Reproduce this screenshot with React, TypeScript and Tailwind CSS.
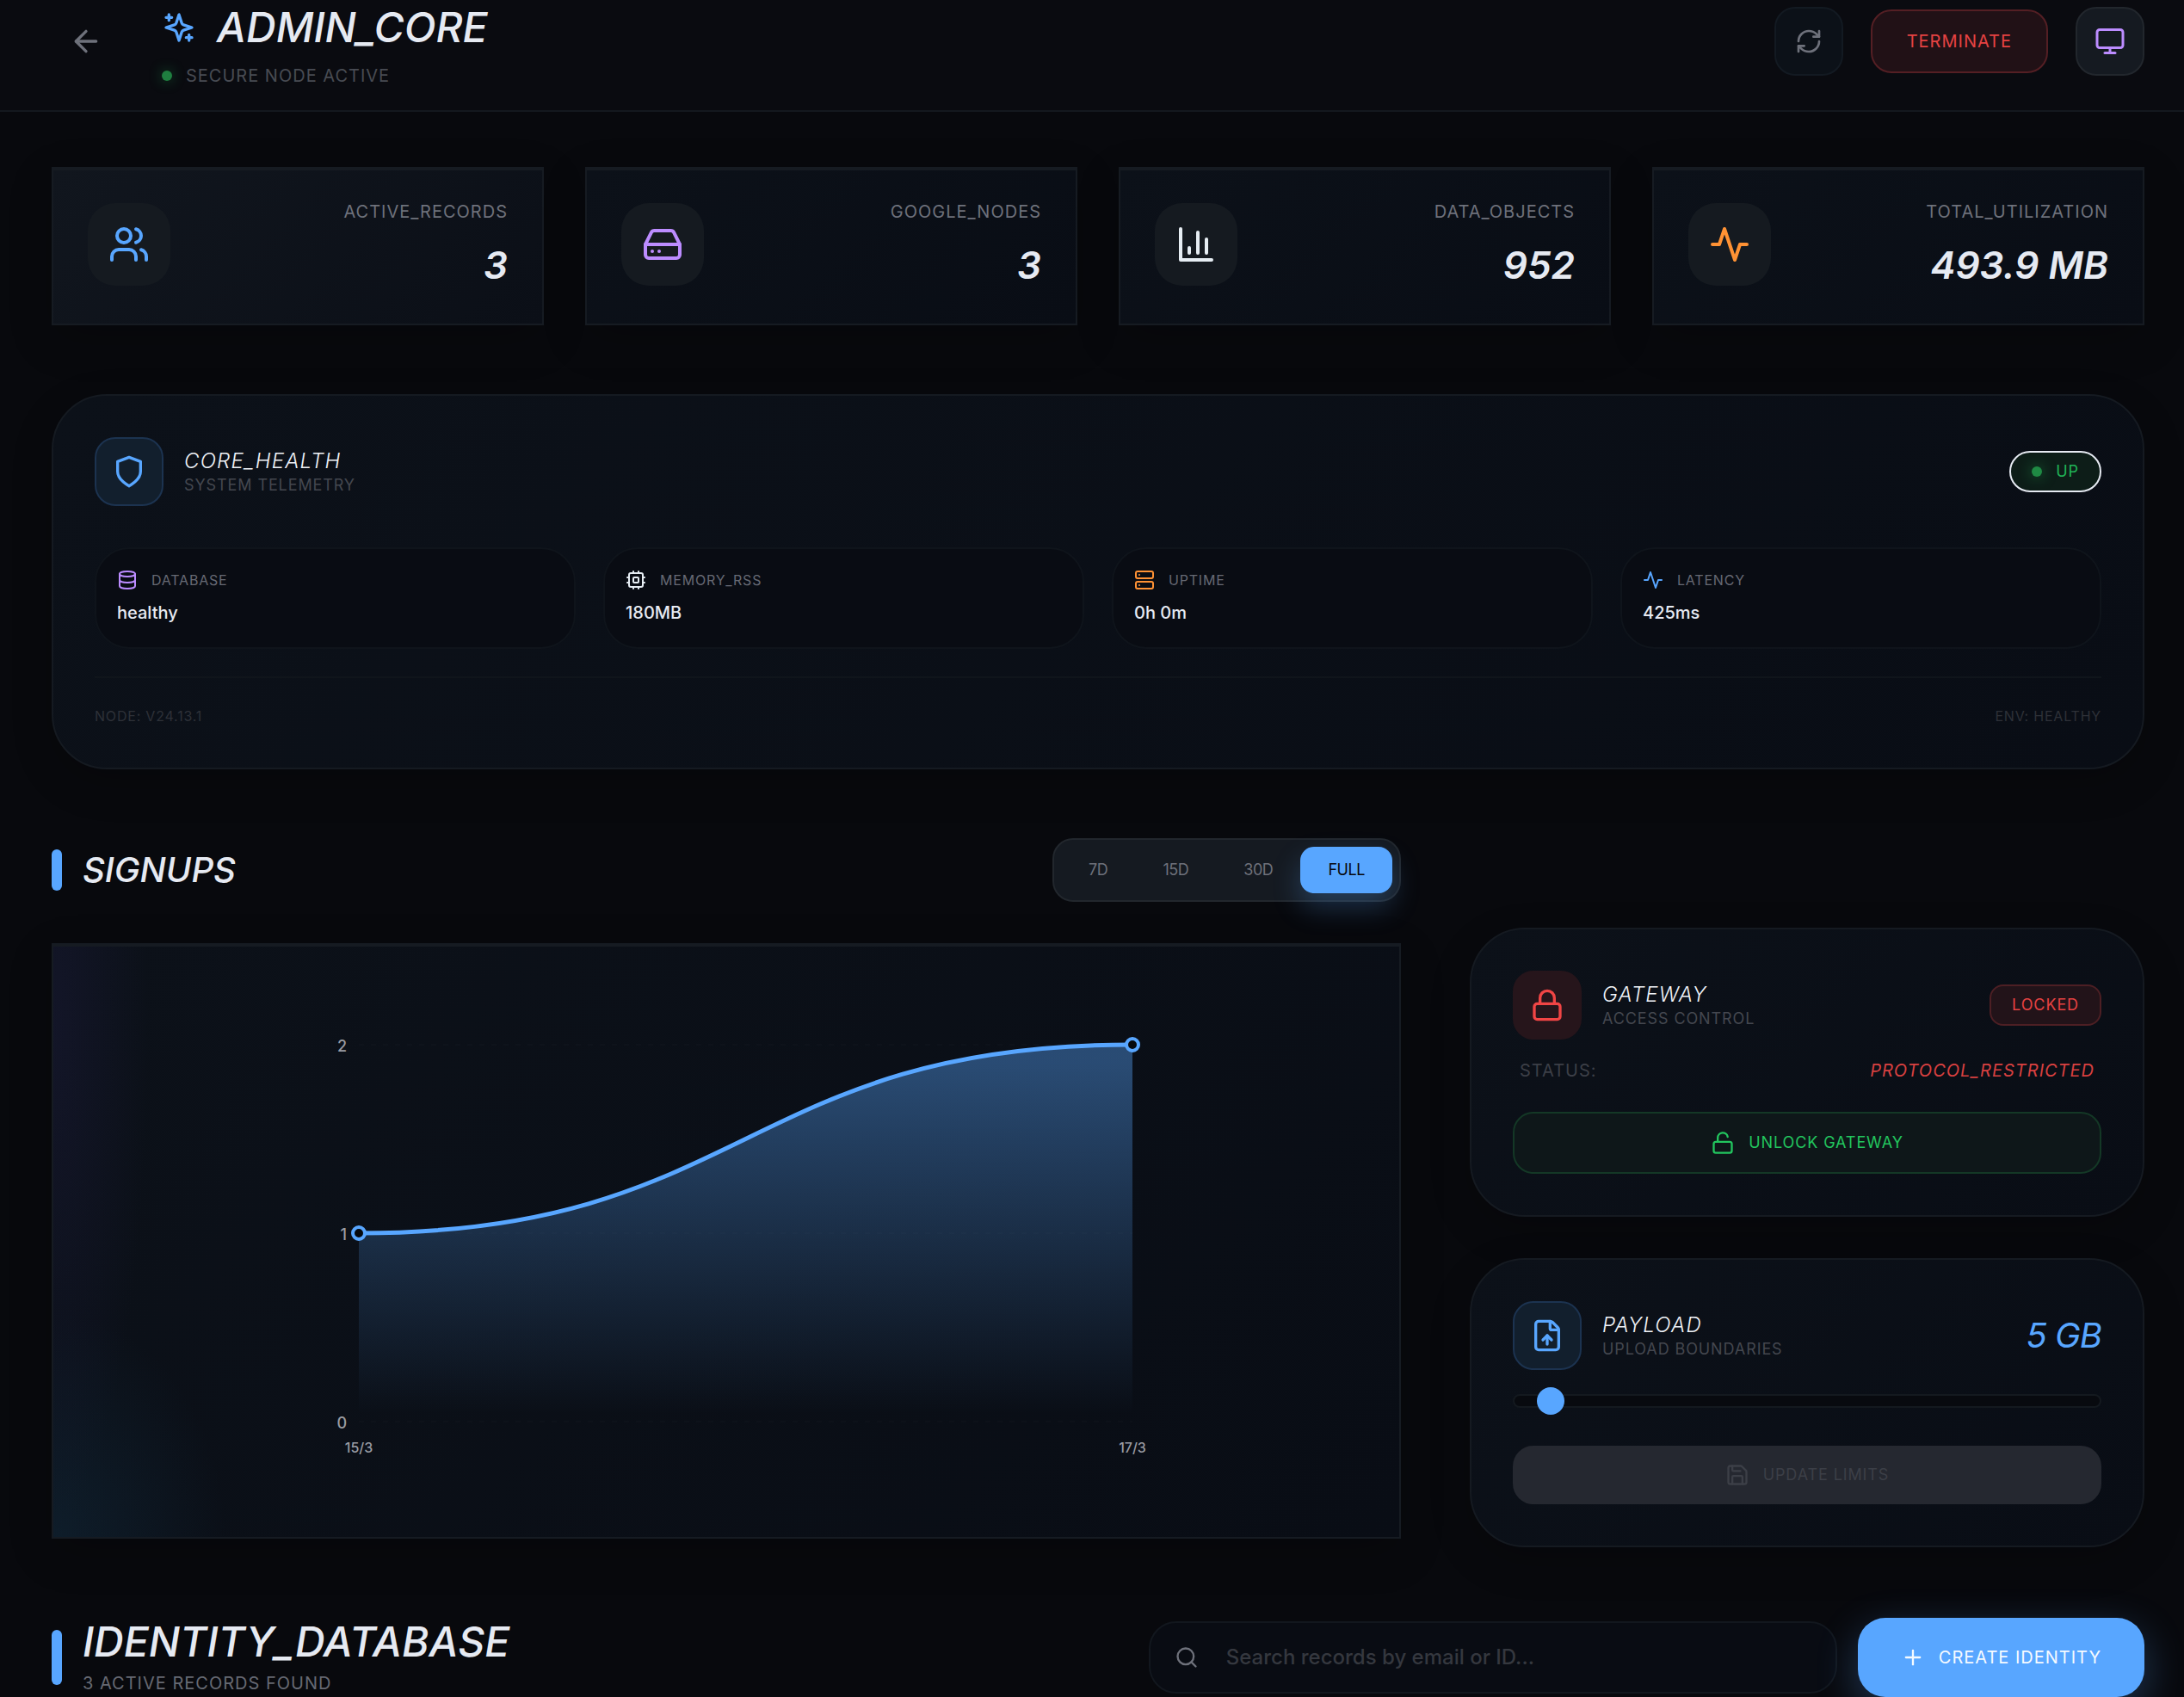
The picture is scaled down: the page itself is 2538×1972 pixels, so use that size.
import type { ReactNode } from "react"
import {
  ArrowLeft,
  Database,
  FileUp,
  HardDrive,
  Lock,
  LockOpen,
  Monitor,
  Plus,
  RefreshCw,
  Save,
  Search,
  Server,
  Users,
} from "lucide-react"

const panel =
  "rounded-[64px] border-2 border-[#151a21] bg-linear-135 from-[#0c1119] to-[#090d15] p-12 shadow-[0_16px_48px_rgba(0,0,0,0.2)]"

function Icon({ className, children }: { className: string; children: ReactNode }) {
  return (
    <svg
      className={className}
      viewBox="0 0 24 24"
      fill="none"
      stroke="currentColor"
      strokeWidth="2"
      strokeLinecap="round"
      strokeLinejoin="round"
      aria-hidden="true"
    >
      {children}
    </svg>
  )
}

function SparklesIcon({ className }: { className: string }) {
  return (
    <Icon className={className}>
      <path d="m12 3-1.912 5.813a2 2 0 0 1-1.275 1.275L3 12l5.813 1.912a2 2 0 0 1 1.275 1.275L12 21l1.912-5.813a2 2 0 0 1 1.275-1.275L21 12l-5.813-1.912a2 2 0 0 1-1.275-1.275L12 3Z" />
      <path d="M5 3v4M19 17v4M3 5h4M17 19h4" />
    </Icon>
  )
}

function BarsIcon({ className }: { className: string }) {
  return (
    <Icon className={className}>
      <path d="M3 3v18h18M18 17V9M13 17V5M8 17v-3" />
    </Icon>
  )
}

function PulseIcon({ className }: { className: string }) {
  return (
    <Icon className={className}>
      <path d="M22 12h-4l-3 9L9 3l-3 9H2" />
    </Icon>
  )
}

function ShieldIcon({ className }: { className: string }) {
  return (
    <Icon className={className}>
      <path d="M12 22s8-4 8-10V5l-8-3-8 3v7c0 6 8 10 8 10" />
    </Icon>
  )
}

function ChipIcon({ className }: { className: string }) {
  return (
    <Icon className={className}>
      <rect x="4" y="4" width="16" height="16" rx="2" />
      <rect x="9" y="9" width="6" height="6" rx="1" />
      <path d="M15 2v2M15 20v2M2 15h2M2 9h2M20 15h2M20 9h2M9 2v2M9 20v2" />
    </Icon>
  )
}

const stats = [
  { label: "ACTIVE_RECORDS", value: "3", icon: <Users className="size-12 text-[#58a6ff]" />, bg: "from-[#11161e] to-[#0b0f17]" },
  { label: "GOOGLE_NODES", value: "3", icon: <HardDrive className="size-12 text-[#bc8cff]" />, bg: "from-[#0c1119] to-[#090d15]" },
  { label: "DATA_OBJECTS", value: "952", icon: <BarsIcon className="size-12 text-[#e6edf3]" />, bg: "from-[#0c1119] to-[#090d15]" },
  { label: "TOTAL_UTILIZATION", value: "493.9 MB", icon: <PulseIcon className="size-12 text-[#ff9234]" />, bg: "from-[#0c1119] to-[#090d15]" },
]

const telemetry = [
  { label: "DATABASE", value: "healthy", icon: <Database className="size-6 text-[#bc8cff]" /> },
  { label: "MEMORY_RSS", value: "180MB", icon: <ChipIcon className="size-6 text-[#e6edf3]" /> },
  { label: "UPTIME", value: "0h 0m", icon: <Server className="size-6 text-[#ff9234]" /> },
  { label: "LATENCY", value: "425ms", icon: <PulseIcon className="size-6 text-[#58a6ff]" /> },
]

const ranges = ["7D", "15D", "30D", "FULL"]

function PanelTitle({ icon, box, title, subtitle }: { icon: ReactNode; box: string; title: string; subtitle: string }) {
  return (
    <div className="flex items-center gap-6">
      <div className={`flex size-20 items-center justify-center rounded-3xl ${box}`}>{icon}</div>
      <div className="pt-1">
        <h3 className="text-2xl leading-7 font-light tracking-wider text-[#f0f3f8] italic">{title}</h3>
        <p className="text-lg leading-7 tracking-wider text-[#44474f]">{subtitle}</p>
      </div>
    </div>
  )
}

function SignupsChart() {
  return (
    <svg className="mx-auto block h-[560px] w-[1000px] max-w-full" viewBox="0 0 1000 560" role="img" aria-label="Signups">
      <defs>
        <linearGradient id="signups" x1="0" y1="0" x2="0" y2="1">
          <stop offset="5%" stopColor="#58a6ff" stopOpacity="0.4" />
          <stop offset="98%" stopColor="#58a6ff" stopOpacity="0" />
        </linearGradient>
      </defs>
      <g stroke="#ffffff" strokeOpacity="0.015" strokeWidth="2" strokeDasharray="6 8">
        <path d="M73 52H972" />
        <path d="M73 271H972" />
        <path d="M73 490H972" />
      </g>
      <path d="M73 271C522.5 271 522.5 52 972 52V490H73Z" fill="url(#signups)" />
      <path d="M73 271C522.5 271 522.5 52 972 52" fill="none" stroke="#58a6ff" strokeWidth="5" />
      <g fill="#07090d" stroke="#58a6ff" strokeWidth="4">
        <circle cx="73" cy="271" r="7" />
        <circle cx="972" cy="52" r="7" />
      </g>
      <g fill="#9a9ca4" fontWeight="500">
        <g fontSize="18" textAnchor="end">
          <text x="59" y="60">2</text>
          <text x="59" y="279">1</text>
          <text x="59" y="498">0</text>
        </g>
        <g fontSize="16" textAnchor="middle">
          <text x="73" y="526">15/3</text>
          <text x="972" y="526">17/3</text>
        </g>
      </g>
    </svg>
  )
}

export default function App() {
  return (
    <div className="h-screen overflow-hidden bg-[#08090d] font-['Inter','Noto_Sans',sans-serif] text-[#e6eaf2]">
      {/* Header */}
      <header className="border-b-2 border-[#14181e] bg-[#0a0b10] pt-2 pr-[46px] pb-6 pl-[60px]">
        <div className="flex items-start justify-between">
          <div className="flex items-start gap-12">
            <button type="button" aria-label="Back" className="flex size-20 items-center justify-center text-[#6e717b]">
              <ArrowLeft className="size-10" />
            </button>
            <div className="flex flex-col gap-4">
              <div className="flex items-center gap-6">
                <SparklesIcon className="size-10 text-[#58a6ff]" />
                <h1 className="text-5xl leading-12 font-medium italic">ADMIN_CORE</h1>
              </div>
              <div className="flex items-center gap-4">
                <span className="size-3 rounded-full bg-[#1f7f40] shadow-[0_0_16px_rgba(34,197,94,0.4)]" />
                <span className="text-xl leading-8 tracking-wider text-[#484b53]">SECURE NODE ACTIVE</span>
              </div>
            </div>
          </div>
          <div className="flex h-20 items-center gap-8">
            <button
              type="button"
              aria-label="Refresh"
              className="flex size-20 items-center justify-center rounded-3xl border-2 border-[#131a22] bg-[#0c1118] text-[#6e717b]"
            >
              <RefreshCw className="size-8" />
            </button>
            <button
              type="button"
              className="h-[74px] rounded-3xl border-2 border-[#541f24] bg-[#211116] px-10 text-xl tracking-wider text-[#e54242]"
            >
              TERMINATE
            </button>
            <button
              type="button"
              aria-label="Display"
              className="flex size-20 items-center justify-center rounded-3xl border-2 border-[#22272d] bg-[#151a21] text-[#bc8cff]"
            >
              <Monitor className="size-9" />
            </button>
          </div>
        </div>
      </header>

      <main className="flex flex-col gap-20 pt-16 pr-[46px] pl-[60px]">
        {/* Stats */}
        <section className="grid grid-cols-4 gap-12">
          {stats.map((stat) => (
            <div
              key={stat.label}
              className={`flex items-start justify-between border-2 border-[#161b22] bg-linear-135 p-10 shadow-[inset_0_2px_0_#161b22,0_16px_48px_rgba(0,0,0,0.2)] ${stat.bg}`}
            >
              <div className="flex size-24 items-center justify-center rounded-[32px] bg-[#151a20]">{stat.icon}</div>
              <div className="flex flex-col gap-6 text-right">
                <p className="text-xl leading-5 tracking-wider text-[#6e717b]">{stat.label}</p>
                <p className="text-[44px] leading-[56px] font-semibold italic">{stat.value}</p>
              </div>
            </div>
          ))}
        </section>

        {/* Core health */}
        <section className={panel}>
          <div className="flex items-center justify-between">
            <PanelTitle
              icon={<ShieldIcon className="size-10 text-[#58a6ff]" />}
              box="border-2 border-[#1c3350] bg-[#121f2d]"
              title="CORE_HEALTH"
              subtitle="SYSTEM TELEMETRY"
            />
            <div className="flex h-12 items-center gap-4 rounded-full border-2 border-[#e6eaf2] bg-[#0d1d18] px-6">
              <span className="size-3 rounded-full bg-[#1f8a44] shadow-[0_0_16px_rgba(34,197,94,0.5)]" />
              <span className="text-lg tracking-wider text-[#20b457]">UP</span>
            </div>
          </div>
          <div className="mt-12 grid grid-cols-4 gap-8">
            {telemetry.map((item) => (
              <div key={item.label} className="flex flex-col gap-2.5 rounded-[40px] border-2 border-[#0f141b] bg-[#090c13] p-6">
                <div className="flex h-6 items-center gap-4">
                  {item.icon}
                  <span className="text-base tracking-wider text-[#666973]">{item.label}</span>
                </div>
                <p className="text-xl leading-8 font-medium">{item.value}</p>
              </div>
            ))}
          </div>
          <div className="mt-8 flex justify-between border-t-2 border-[#10151b] pt-8 text-base leading-6 tracking-wider text-[#2e3138]">
            <span>NODE: V24.13.1</span>
            <span>ENV: HEALTHY</span>
          </div>
        </section>

        {/* Signups and controls */}
        <div className="grid grid-cols-[2fr_1fr] items-start gap-20">
          <section className="flex flex-col gap-12">
            <div className="flex items-center justify-between">
              <div className="flex items-center gap-6">
                <span className="h-12 w-3 rounded-full bg-[#58a6ff]" />
                <h2 className="text-[40px] leading-12 font-medium italic">SIGNUPS</h2>
              </div>
              <div className="flex rounded-3xl border-2 border-[#22272d] bg-[#151a21] p-2">
                {ranges.map((range) => (
                  <button
                    key={range}
                    type="button"
                    aria-pressed={range === "FULL"}
                    className={`h-[54px] rounded-2xl px-8 text-lg tracking-tight ${
                      range === "FULL"
                        ? "bg-[#58a6ff] text-[#07080c] shadow-[0_16px_32px_rgba(88,166,255,0.25)]"
                        : "text-[#6e717b]"
                    }`}
                  >
                    {range}
                  </button>
                ))}
              </div>
            </div>
            <div className="border-2 border-[#161b22] bg-[radial-gradient(ellipse_110px_560px_at_0%_15%,rgba(40,35,85,0.25),transparent),radial-gradient(ellipse_200px_260px_at_0%_100%,rgba(22,60,85,0.3),transparent),linear-gradient(135deg,#0c1119,#090d15)] p-16 shadow-[inset_0_2px_0_#161b22,0_16px_48px_rgba(0,0,0,0.2)]">
              <SignupsChart />
            </div>
          </section>

          <aside className="flex flex-col gap-12 pt-[104px]">
            <section className={panel}>
              <div className="flex items-center justify-between">
                <PanelTitle
                  icon={<Lock className="size-10 text-[#f04545]" />}
                  box="bg-[#26151b]"
                  title="GATEWAY"
                  subtitle="ACCESS CONTROL"
                />
                <span className="flex h-12 items-center rounded-2xl border-2 border-[#4d1f24] bg-[#221319] px-6 text-lg tracking-wider text-[#e54242]">
                  LOCKED
                </span>
              </div>
              <div className="mt-5 mb-8 flex justify-between px-2 text-xl leading-8 tracking-wider">
                <span className="text-[#3c3f47]">STATUS:</span>
                <span className="text-[#d84040] italic">PROTOCOL_RESTRICTED</span>
              </div>
              <button
                type="button"
                className="flex h-18 w-full items-center justify-center gap-4 rounded-3xl border-2 border-[#143826] bg-[#0e1719] text-lg tracking-wider text-[#22c55e]"
              >
                <LockOpen className="size-7" />
                UNLOCK GATEWAY
              </button>
            </section>

            <section className={panel}>
              <div className="flex items-center justify-between">
                <PanelTitle
                  icon={<FileUp className="size-10 text-[#58a6ff]" />}
                  box="border-2 border-[#1c3350] bg-[#121f2d]"
                  title="PAYLOAD"
                  subtitle="UPLOAD BOUNDARIES"
                />
                <span className="text-[40px] leading-12 tracking-tight text-[#58a6ff] italic">5 GB</span>
              </div>
              <input
                type="range"
                min="1"
                max="100"
                defaultValue="5"
                aria-label="Upload limit"
                className="mt-5 block h-8 w-full appearance-none bg-transparent [&::-webkit-slider-runnable-track]:h-4 [&::-webkit-slider-runnable-track]:rounded-full [&::-webkit-slider-runnable-track]:border-2 [&::-webkit-slider-runnable-track]:border-[#14191f] [&::-webkit-slider-runnable-track]:bg-[#080a0f] [&::-webkit-slider-thumb]:-mt-2.5 [&::-webkit-slider-thumb]:size-8 [&::-webkit-slider-thumb]:appearance-none [&::-webkit-slider-thumb]:rounded-full [&::-webkit-slider-thumb]:bg-[#58a6ff]"
              />
              <button
                type="button"
                disabled
                className="mt-9 flex h-17 w-full items-center justify-center gap-4 rounded-3xl bg-[#252830] text-lg tracking-wider text-[#3c3f47]"
              >
                <Save className="size-7" />
                UPDATE LIMITS
              </button>
            </section>
          </aside>
        </div>

        {/* Identity database */}
        <section className="flex items-center justify-between">
          <div className="flex items-center gap-6">
            <span className="h-16 w-3 rounded-full bg-[#58a6ff]" />
            <div>
              <h2 className="text-5xl leading-15 font-medium italic">IDENTITY_DATABASE</h2>
              <p className="text-xl leading-9 tracking-wider text-[#666973]">3 ACTIVE RECORDS FOUND</p>
            </div>
          </div>
          <div className="flex items-center gap-6">
            <label className="flex h-[84px] w-[800px] items-center gap-8 rounded-[32px] border-2 border-[#12171e] bg-[#090c13] px-7">
              <Search className="size-7 text-[#6e717b]" />
              <input
                type="search"
                aria-label="Search records"
                placeholder="Search records by email or ID..."
                className="min-w-0 flex-1 bg-transparent text-2xl font-medium outline-none placeholder:text-[#35383f]"
              />
            </label>
            <button
              type="button"
              className="flex h-23 items-center gap-4 rounded-[32px] bg-[#58a6ff] px-[50px] text-xl tracking-wider text-[#f5faff] shadow-[0_16px_48px_rgba(88,166,255,0.3)]"
            >
              <Plus className="size-7" />
              CREATE IDENTITY
            </button>
          </div>
        </section>
      </main>
    </div>
  )
}
